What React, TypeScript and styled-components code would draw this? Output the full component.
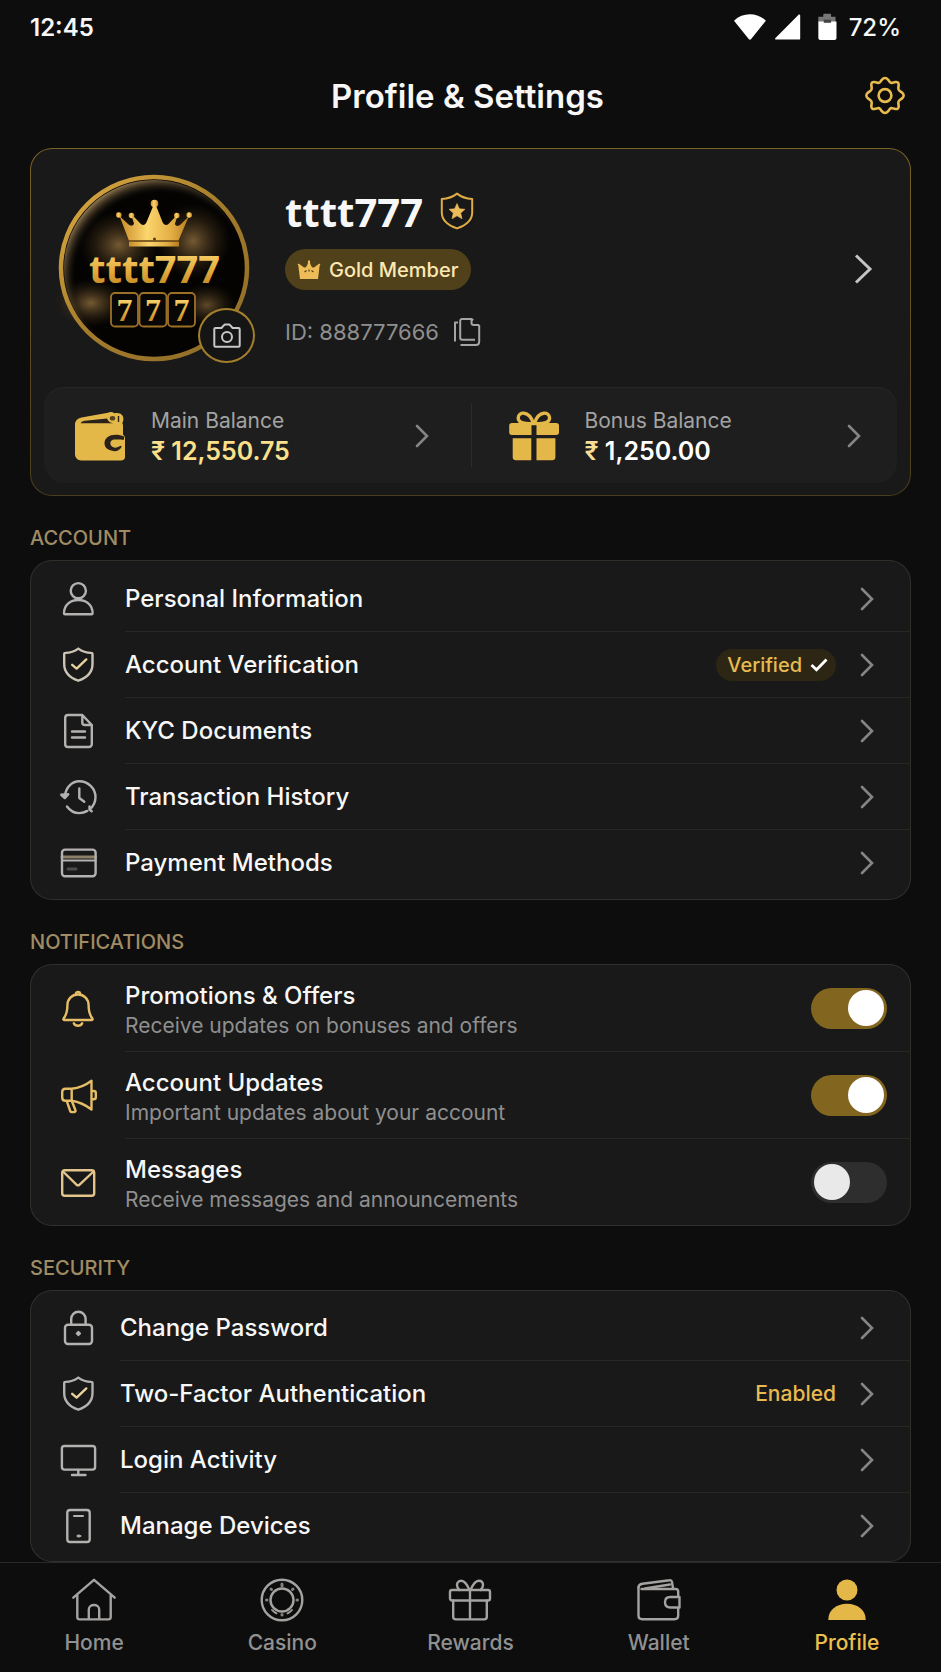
import { ReactNode, useState } from "react";
import styled, { createGlobalStyle } from "styled-components";

// === Theme ===
const theme = {
  colors: {
    background: "#0d0d0d",
    card: "#191919",
    panel: "#1e1e1e",
    line: "#272725",
    cardBorder: "#302f29",
    text: "#f7f7f7",
    textMuted: "#8f8f8f",
    icon: "#b4b2b0",
    gold: "#e8bb50",
    goldMuted: "#a08c64",
    goldDark: "#82661f",
    cream: "#fbe9b4",
  },
};

const GlobalStyle = createGlobalStyle`
  * {
    box-sizing: border-box;
  }

  body {
    margin: 0;
    background: ${theme.colors.background};
    color: ${theme.colors.text};
    font-family: Inter, "Noto Sans", sans-serif;
  }

  a {
    color: inherit;
    text-decoration: none;
  }

  button {
    padding: 0;
    border: 0;
    background: none;
    color: inherit;
    font: inherit;
    cursor: pointer;
  }

  svg {
    display: block;
    flex: none;
    overflow: visible;
  }
`;

// === Layout ===
const Page = styled.div`
  display: flex;
  flex-direction: column;
  min-height: 100vh;
`;

const StatusBar = styled.div`
  display: flex;
  align-items: center;
  justify-content: space-between;
  height: 54px;
  padding: 0 40px 0 30px;
  font-size: 24px;
  font-weight: 500;
`;

const Clock = styled.span`
  font-weight: 600;
`;

const StatusIcons = styled.div`
  display: flex;
  align-items: center;
  gap: 13px;
`;

const Header = styled.header`
  display: grid;
  grid-template-columns: 1fr auto 1fr;
  align-items: center;
  height: 84px;
  padding: 0 36px 0 30px;
`;

const Title = styled.h1`
  grid-column: 2;
  margin: 0;
  font-size: 33px;
  font-weight: 600;
`;

const SettingsButton = styled.button`
  justify-self: end;
`;

const Main = styled.main`
  flex: 1;
  padding: 10px 30px 0;
`;

// === Profile card ===
const ProfileCard = styled.section`
  padding: 26px 13px 12px;
  border: 1px solid transparent;
  border-radius: 22px;
  background:
    linear-gradient(${theme.colors.card}, ${theme.colors.card}) padding-box,
    linear-gradient(180deg, #7a6124, #4a3d1c) border-box;
`;

const ProfileTop = styled.div`
  display: flex;
  align-items: center;
  padding: 0 24px 26px 15px;
`;

const AvatarBox = styled.div`
  position: relative;
  margin-right: 36px;
`;

const CameraButton = styled.button`
  position: absolute;
  right: -6px;
  bottom: -2px;
  display: flex;
  align-items: center;
  justify-content: center;
  width: 57px;
  height: 55px;
  border: 2px solid #a37f2c;
  border-radius: 50%;
  background: #151515;
`;

const ProfileInfo = styled.div`
  display: flex;
  flex: 1;
  flex-direction: column;
  align-items: flex-start;
`;

const NameRow = styled.div`
  display: flex;
  align-items: center;
  gap: 17px;
  height: 42px;
  margin-bottom: 17px;
`;

const Name = styled.h2`
  margin: 0;
  font-family: "Noto Sans", sans-serif;
  font-size: 40px;
  font-weight: 700;
`;

const MemberBadge = styled.div`
  display: flex;
  align-items: center;
  gap: 8px;
  height: 41px;
  margin-bottom: 28px;
  padding: 0 13px 0 12px;
  border-radius: 21px;
  background: #51411a;
  color: ${theme.colors.cream};
  font-size: 20px;
  font-weight: 500;
`;

const IdRow = styled.div`
  display: flex;
  align-items: center;
  gap: 14px;
  height: 28px;
  color: ${theme.colors.textMuted};
  font-size: 22px;
`;

const BalancePanel = styled.div`
  display: grid;
  grid-template-columns: 1fr 1fr;
  align-items: center;
  height: 96px;
  border-radius: 20px;
  background: ${theme.colors.panel};
  box-shadow: inset 0 1px 0 #262626;
`;

const Balance = styled.a`
  display: flex;
  align-items: center;
  height: 64px;
  padding: 2px 42px 0 30px;

  & + & {
    padding: 2px 36px 0;
    border-left: 1px solid #2c2c2c;
  }
`;

const BalanceText = styled.div`
  display: flex;
  flex: 1;
  flex-direction: column;
  padding: 2px 0 0 25px;
`;

const BalanceLabel = styled.span`
  color: #a3a3a3;
  font-size: 21px;
  line-height: 28px;
`;

const BalanceValue = styled.span<{ $gold?: boolean }>`
  color: ${({ $gold }) => ($gold ? "#fbe08c" : "#ffffff")};
  font-size: 25px;
  font-weight: 600;
  line-height: 32px;
`;

const Currency = styled.span`
  color: #f9dd94;
`;

// === Settings lists ===
const SectionTitle = styled.h3`
  margin: 30px 0 10px;
  color: ${theme.colors.goldMuted};
  font-size: 20px;
  font-weight: 500;
  line-height: 24px;
`;

const Card = styled.div<{ $pad: string }>`
  padding: ${({ $pad }) => $pad};
  border-radius: 22px;
  background: ${theme.colors.card};
  box-shadow: inset 0 0 0 1px ${theme.colors.cardBorder};
`;

const RowBody = styled.div`
  display: flex;
  flex: 1;
  align-items: center;
  align-self: stretch;
  border-bottom: 1px solid ${theme.colors.line};
`;

const Row = styled.a<{ $gap: number }>`
  display: flex;
  align-items: center;
  gap: ${({ $gap }) => $gap}px;
  height: 66px;
  padding: 0 1px 0 30px;

  ${RowBody} {
    padding-right: 36px;
  }

  &:last-child ${RowBody} {
    border-bottom-color: transparent;
  }
`;

const RowLabel = styled.span`
  flex: 1;
  font-size: 24px;
  font-weight: 500;
`;

const VerifiedPill = styled.span`
  display: flex;
  align-items: center;
  gap: 8px;
  height: 32px;
  margin-right: 24px;
  padding: 0 8px 0 11px;
  border-radius: 16px;
  background: #2e2614;
  color: ${theme.colors.gold};
  font-size: 20px;
  font-weight: 500;
`;

const EnabledText = styled.span`
  margin-right: 24px;
  color: ${theme.colors.gold};
  font-size: 21px;
  font-weight: 500;
`;

const SwitchRow = styled.label`
  display: flex;
  align-items: center;
  gap: 28px;
  height: 87px;
  padding: 0 1px 0 31px;
  cursor: pointer;

  ${RowBody} {
    padding-right: 23px;
  }

  &:last-child ${RowBody} {
    border-bottom-color: transparent;
  }
`;

const SwitchText = styled.span`
  display: flex;
  flex: 1;
  flex-direction: column;
  padding-top: 6px;
  font-size: 24px;
  font-weight: 500;
  line-height: 30px;
`;

const SwitchHint = styled.span`
  color: ${theme.colors.textMuted};
  font-size: 21px;
  font-weight: 400;
`;

const Switch = styled.input`
  appearance: none;
  display: flex;
  align-items: center;
  width: 76px;
  height: 41px;
  margin: 0;
  padding: 0 3px;
  border-radius: 21px;
  background: #2e2e2e;
  cursor: pointer;

  &::before {
    content: "";
    width: 36px;
    height: 36px;
    border-radius: 50%;
    background: #e9e9e9;
  }

  &:checked {
    justify-content: flex-end;
    background: ${theme.colors.goldDark};
  }

  &:checked::before {
    background: #ffffff;
  }
`;

// === Bottom navigation ===
const BottomNav = styled.nav`
  position: sticky;
  bottom: 0;
  display: grid;
  grid-template-columns: repeat(5, 1fr);
  padding: 13px 0 16px;
  border-top: 1px solid #292929;
  background: ${theme.colors.background};
`;

const NavItem = styled.a<{ $active?: boolean }>`
  display: flex;
  flex-direction: column;
  align-items: center;
  gap: 6px;
  color: ${({ $active }) => ($active ? "#ecc04c" : "#919191")};
  font-size: 21px;
  font-weight: 500;
  line-height: 26px;
`;

// === Icons ===
type IconProps = {
  children: ReactNode;
  size?: number;
  color?: string;
  stroke?: number;
};

const Icon = ({ children, size = 36, color = theme.colors.icon, stroke = 2.4 }: IconProps) => (
  <svg
    width={size}
    height={size}
    viewBox={`0 0 ${size} ${size}`}
    fill="none"
    stroke={color}
    strokeWidth={stroke}
    strokeLinecap="round"
    strokeLinejoin="round"
    aria-hidden="true"
  >
    {children}
  </svg>
);

const Chevron = ({ large }: { large?: boolean }) =>
  large ? (
    <svg width="20" height="32" viewBox="0 0 20 32" fill="none" stroke="#c4c4c4" strokeWidth="3" aria-hidden="true">
      <path d="M3 3.500 17 17 3 30.500" />
    </svg>
  ) : (
    <svg
      width="14"
      height="24"
      viewBox="0 0 14 24"
      fill="none"
      stroke="#858585"
      strokeWidth="2.6"
      strokeLinecap="round"
      aria-hidden="true"
    >
      <path d="M2 2 12 12 2 22" />
    </svg>
  );

const UserIcon = () => (
  <Icon>
    <circle cx="18.3" cy="9.7" r="7.6" />
    <path d="M4 32.2c0-8 6-13.2 14.3-13.2s14.3 5.2 14.3 13.2c0 .8-.4 1-1 1H5c-.6 0-1-.3-1-1z" />
  </Icon>
);

const ShieldIcon = ({ color }: { color?: string }) => (
  <Icon color={color}>
    <path d="M18.3 1.6C14.5 4.4 9.5 5.8 5.4 5.9c-.8 0-1.2.4-1.2 1.2V17c0 8.8 6.2 14 14.1 16.7C26.2 31 32.5 25.8 32.5 17V7.1c0-.8-.4-1.200-1.200-1.200-4.100-.1-9.200-1.500-13-4.300z" />
    <path d="m12.200 17.800 4.400 3.800 9.700-9.200" stroke="#e9d29c" />
  </Icon>
);

const DocumentIcon = () => (
  <Icon>
    <path d="M22.3 2H8a2.800 2.800 0 0 0-2.800 2.800v26.400A2.800 2.800 0 0 0 8 34h21a2.800 2.800 0 0 0 2.800-2.800V12zM22.300 2v7.400c0 1.800.8 2.600 2.600 2.600h6.900" />
    <path d="M12 18.500h13M12 24.500h13" />
  </Icon>
);

const HistoryIcon = () => (
  <Icon>
    <path d="M5 16.500C5.800 8.500 12 2.300 19.300 2.300c8.700 0 16.200 7 16.200 15.700 0 5.200-2.200 9.400-5.800 12.300M7 27.500c3 4.300 7.300 6.600 12.300 6.600 3 0 5.700-.8 8-2.200M29.500 27.500v3l2.200 1.700" />
    <path d="M19.300 9.500V19l5 3.800" />
    <path d="m1.300 15.800 3.500 3.300 3.500-3.800z" fill={theme.colors.icon} />
  </Icon>
);

const CardIcon = () => (
  <Icon>
    <path d="M2 12h33.600" stroke="#8d8069" strokeWidth="3" />
    <path d="M2 15.400h33.600" strokeWidth="2" />
    <path d="M8 24h8" stroke="#4c4a48" strokeWidth="3" />
    <rect x="2" y="4.600" width="33.600" height="26.600" rx="3" />
  </Icon>
);

const BellIcon = () => (
  <Icon color="#e5bd66">
    <path d="M17 3.500c-6.200 0-10.600 4.600-10.600 10.800 0 7-1.200 9.900-3.600 13-.7 1-.4 1.700.7 1.700h27c1.100 0 1.400-.7.700-1.700-2.400-3.100-3.600-6-3.600-13C27.600 8.100 23.200 3.500 17 3.500z" />
    <path d="M14.800 3.200c0-3 4.400-3 4.400 0M12.800 32.300c1.500 3.300 6.900 3.300 8.400 0" />
  </Icon>
);

const MegaphoneIcon = () => (
  <Icon color="#e5bd66">
    <path d="M4.500 10.800h6.200C18.600 10 25 7 30.500 2.800v28.700C25 27.300 18.600 24 10.700 22.800H4.500c-2 0-3.300-1.300-3.300-3.300v-5.400c0-2 1.300-3.300 3.300-3.300zM10.700 10.800v12" />
    <path d="M5.800 23.200 9.200 33c.4 1.200 1.200 1.200 2.200 1.100l1.800-.1c1.400-.1 1.700-1.100 1.100-2.200l-3.400-8.600M31 13h1.700c1.300 0 2.100.8 2.100 2v4.200c0 1.200-.8 2-2.100 2H31" />
  </Icon>
);

const MailIcon = () => (
  <Icon color="#e3c48a">
    <rect x="1.2" y="5.2" width="32" height="25.6" rx="2.6" />
    <path d="m2 6.500 14.200 13.800h1.600L32.500 6.500" />
  </Icon>
);

const LockIcon = () => (
  <Icon>
    <rect x="5" y="14.800" width="27" height="19.200" rx="3" />
    <path d="M11.200 14.800V9a7.200 7.200 0 0 1 14.400 0v5.800" />
    <path d="m18.400 21.500 2 2-2 2-2-2z" fill={theme.colors.icon} strokeWidth="1.500" />
  </Icon>
);

const MonitorIcon = () => (
  <Icon>
    <rect x="1.900" y="4" width="33.200" height="23.600" rx="2.600" />
    <path d="M18.300 28v4.600M12 33h13.500" />
  </Icon>
);

const PhoneIcon = () => (
  <Icon>
    <rect x="7.300" y="2" width="22.400" height="32" rx="2.800" />
    <path d="M14 8h9" strokeWidth="2" />
    <ellipse cx="18.800" cy="28" rx="2" ry="1" fill={theme.colors.icon} strokeWidth="1" />
  </Icon>
);

const GearIcon = () => (
  <Icon size={40} color={theme.colors.gold} stroke={2.6}>
    <path d="M16.800 3.800Q20 .2 23.200 3.800L24.800 6Q25.800 7.200 27.400 6.700L30.600 6Q33.600 5.700 33.700 8.700L33.300 12Q33.100 13.800 34.500 14.800L37 16.600Q40.300 19.500 37 22.400L34.500 24.200Q33.100 25.200 33.300 27L33.700 30.300Q33.600 33.300 30.600 33L27.400 32.300Q25.800 31.800 24.800 33L23.200 35.200Q20 38.800 16.800 35.200L15.200 33Q14.200 31.800 12.600 32.300L9.400 33Q6.400 33.300 6.300 30.300L6.700 27Q6.900 25.200 5.500 24.200L3 22.400Q-.3 19.500 3 16.600L5.500 14.800Q6.900 13.800 6.700 12L6.300 8.700Q6.400 5.700 9.400 6L12.600 6.700Q14.200 7.200 15.200 6z" />
    <circle cx="20" cy="19.500" r="6.400" />
  </Icon>
);

const WalletFilledIcon = () => (
  <svg width="52" height="50" viewBox="0 0 52 50" aria-hidden="true">
    <path
      d="M7.500 6.500 34 1.800c2-1.300 4.600-1 6.300.4 4-.5 6.600 0 8.200 2.400 1.300 2 1.200 5.200-.2 7.500.5.7.7 1.600.7 2.600v9.100c1.500 1 2 2.300 2 4.200v18c0 2.300-1.500 3.500-4 3.500H7.300C3.800 49.500 1 46.800 1 43.300V14c0-3.800 2.300-6.700 6.500-7.500z"
      fill="#e4b749"
    />
    <path d="M6.500 12.300c1-1.600 2.500-2.300 4.500-2.600L33 7.400c.8 2.700 3 4.500 6.500 4.900H8.500z" fill="#28221a" />
    <ellipse cx="38.500" cy="7.300" rx="2.700" ry="2.300" fill="#55431d" />
    <path d="M44.500 5v6" stroke="#28221a" strokeWidth="1.4" />
    <path
      d="M50 25.500c-5-2.400-12.400-2.600-16.300.4-5 3.900-4 10.700 1.800 13.200 5 2 10 1.400 12.300-3.600l-1.400-.7c-2.800 2.200-6.700 2.500-8.700.5-2.600-2.600-1.200-6.300 2.500-6.700 3-.3 5.300-.3 9.800.2z"
      fill="#28221a"
    />
  </svg>
);

const GiftFilledIcon = () => (
  <svg width="52" height="50" viewBox="0 0 52 50" fill="#e4b749" aria-hidden="true">
    <path
      d="M25.500 12.500c-7.500.6-15.300-.3-15.300-5.600 0-3.100 2.700-5 5.800-4.700 4.700.5 7.700 4.700 9.500 10.300zm.8 0c7.500.6 15.300-.3 15.300-5.600 0-3.100-2.700-5-5.800-4.700-4.700.5-7.700 4.700-9.500 10.300z"
      fill="none"
      stroke="#e4b749"
      strokeWidth="3.400"
    />
    <path d="M4 12h19.500v12H4c-1.800 0-2.800-1-2.800-2.800v-6.400C1.200 13 2.200 12 4 12zm24.500 0h19.700c1.800 0 2.800 1 2.800 2.800v6.400c0 1.800-1 2.800-2.800 2.800H28.500z" />
    <path d="M4.700 27.200h18.600v22H8c-2.200 0-3.300-1.100-3.300-3.300zm23.800 0h18.900v18.700c0 2.200-1.100 3.300-3.300 3.300H28.500z" />
  </svg>
);

const Avatar = () => (
  <svg width="190" height="186" viewBox="0 0 190 186" role="img" aria-label="tttt777 logo">
    <defs>
      <linearGradient id="ring" x1="0" y1="0" x2="1" y2="1">
        <stop offset="0" stopColor="#e0ad42" />
        <stop offset="0.5" stopColor="#a37b2b" />
        <stop offset="1" stopColor="#8d6c28" />
      </linearGradient>
      <linearGradient id="metal" x1="0" y1="0" x2="0" y2="1">
        <stop offset="0.15" stopColor="#fbd774" />
        <stop offset="0.55" stopColor="#e5ad3e" />
        <stop offset="0.9" stopColor="#c08223" />
      </linearGradient>
      <linearGradient id="crown" x1="0" y1="0" x2="1" y2="0">
        <stop offset="0" stopColor="#c98b28" />
        <stop offset="0.4" stopColor="#fbd56d" />
        <stop offset="0.75" stopColor="#e3ad43" />
        <stop offset="1" stopColor="#b67c21" />
      </linearGradient>
      <radialGradient id="glow">
        <stop offset="0" stopColor="#8a6a3c" stopOpacity="0.85" />
        <stop offset="1" stopColor="#3a2a14" stopOpacity="0" />
      </radialGradient>
      <radialGradient id="rim" cx="0.54" cy="0.55" r="0.56">
        <stop offset="0.84" stopColor="#000" stopOpacity="0" />
        <stop offset="1" stopColor="#a88a5c" stopOpacity="0.8" />
      </radialGradient>
    </defs>
    <ellipse cx="95" cy="93" rx="93" ry="91" fill="#040302" />
    <ellipse cx="60" cy="70" rx="40" ry="34" fill="url(#glow)" />
    <ellipse cx="134" cy="66" rx="38" ry="38" fill="url(#glow)" />
    <ellipse cx="32" cy="128" rx="36" ry="24" fill="url(#glow)" />
    <ellipse cx="148" cy="130" rx="30" ry="22" fill="url(#glow)" opacity="0.8" />
    <ellipse cx="95" cy="93" rx="90" ry="88" fill="url(#rim)" />
    <ellipse cx="95" cy="93" rx="93" ry="91" fill="none" stroke="url(#ring)" strokeWidth="4.5" />
    <g fill="url(#crown)">
      <path d="M60.500 41 69 49c2.500 2.300 5 2.400 6-.5l-2.500-7.500 1.300-.5 8 8.500c2.500 2 4.700 1 6-2.500L95 29l1.500.2L103.500 47c1.300 3 3.700 4 6 2l7.500-8 1.300.6-2.400 7.400c1 2.600 3.500 2.500 6 .3l8-8-10.500 24.500H70z" />
      <path d="M70 66.500h50v5H70z" />
      <circle cx="95.5" cy="28.5" r="3.8" />
      <circle cx="59.800" cy="40" r="2.8" />
      <circle cx="72.500" cy="40.500" r="2.8" />
      <circle cx="117.800" cy="40.500" r="2.8" />
      <circle cx="130.200" cy="40" r="2.8" />
    </g>
    <path d="M70 65.800h50" stroke="#6b4413" />
    <circle cx="95.5" cy="64" r="1.500" fill="#5a3a10" />
    <text
      x="95.500"
      y="107.500"
      textAnchor="middle"
      fontFamily="Noto Sans, sans-serif"
      fontSize="38"
      fontWeight="700"
      fill="url(#metal)"
    >
      tttt777
    </text>
    <g fill="#090705" stroke="#9d7028" strokeWidth="1.8">
      <rect x="52" y="118" width="27" height="33.500" rx="4" />
      <rect x="80.500" y="118" width="27" height="33.500" rx="4" />
      <rect x="109" y="118" width="27" height="33.500" rx="4" />
    </g>
    <g fontFamily="Liberation Serif, serif" fontSize="32" fontWeight="700" fill="url(#metal)" textAnchor="middle">
      <text x="65.500" y="145.500">7</text>
      <text x="94" y="145.500">7</text>
      <text x="122.500" y="145.500">7</text>
    </g>
  </svg>
);

const CameraIcon = () => (
  <svg
    width="28"
    height="26"
    viewBox="0 0 28 26"
    fill="none"
    stroke="#c8c8c8"
    strokeWidth="2"
    strokeLinejoin="round"
    aria-hidden="true"
  >
    <path d="M2.500 5h6l2.300-2.700c.4-.5.8-.8 1.500-.8h3.500c.7 0 1.100.3 1.500.8L19.600 5h5.900c.7 0 1.200.4 1.200 1.100v16.500c0 .8-.5 1.200-1.200 1.200h-23c-.7 0-1.200-.4-1.200-1.200V6.100C1.300 5.400 1.800 5 2.500 5z" />
    <circle cx="14" cy="14" r="5" />
  </svg>
);

const StarShieldIcon = () => (
  <svg
    width="34"
    height="38"
    viewBox="0 0 34 38"
    fill="none"
    stroke="#e0ac45"
    strokeWidth="2"
    strokeLinejoin="round"
    aria-hidden="true"
  >
    <path d="M17 1.600C13 4.800 7.800 6.600 1.800 7v13.500c0 7.800 6.200 12.800 15.200 15.900 9-3.100 15.200-8.100 15.200-15.900V7C26.200 6.600 21 4.800 17 1.600z" />
    <path
      d="m17 11.500 2.300 5.300 5.700.5-4.300 3.800 1.300 5.700-5-3-5 3 1.300-5.700L9 17.300l5.700-.5z"
      fill="#ecbc5a"
      stroke="#ecbc5a"
      strokeWidth="0.6"
    />
  </svg>
);

const CrownIcon = () => (
  <svg width="24" height="20" viewBox="0 0 24 20" fill="#eebd57" aria-hidden="true">
    <path d="M3 19 1.300 5.200C.1 4.300.8 3.400 2 3.800L7 7.500c1.500.2 2.500-.6 3-2l1-2.600c-.4-1.600 0-2.700 1-2.700s1.400 1.100 1 2.700l1 2.600c.5 1.400 1.500 2.200 3 2l5-3.700c1.200-.4 1.900.5.7 1.400L21 19z" />
    <path d="m7.500 12 2-1.500M12 9.500v2M14.500 10.500l2 1.500" stroke="#51411a" strokeWidth="1.2" />
  </svg>
);

const CopyIcon = () => (
  <svg
    width="28"
    height="30"
    viewBox="0 0 28 30"
    fill="none"
    stroke="#a5a5a5"
    strokeWidth="2"
    strokeLinejoin="round"
    aria-hidden="true"
  >
    <path d="M9.200 2h9.300V5.800c0 1.500.7 2.200 2.200 2.200h5.500M18.500 2l1.800 1.200M26.200 8v16.500c0 2.200-1.100 3.500-3.300 3.500H7.500M22 22.700H9.200c-1.300 0-2-.6-2-1.900V4c0-1.300.7-2 2-2" />
    <path d="M2 24.500V5.500h3" />
  </svg>
);

const navIcons = {
  home: (
    <Icon size={48} color="#a5a3a1">
      <path d="M3.300 21.700 24 3.800l20.700 17.900M7.300 19v22c0 1.600.8 2.400 2.400 2.400h28.600c1.600 0 2.400-.8 2.400-2.400V19M18.800 43V33.500c0-6 10.400-6 10.400 0V43" />
    </Icon>
  ),
  casino: (
    <Icon size={48} color="#a5a3a1">
      <circle cx="24" cy="24" r="20.3" />
      <circle cx="24" cy="24" r="11.5" />
      <path d="M24 8v2M24 38.500v.5M8.500 24H9M39 24h.5M13 13l.5.5M35 13l-.5.5" stroke="#83817f" strokeWidth="3" />
      <path d="M14 34c1.300 1.500 2.800 2.600 4.500 3.400M34 34c-1.300 1.500-2.800 2.600-4.500 3.400" strokeWidth="1.8" />
    </Icon>
  ),
  rewards: (
    <Icon size={48} color="#a5a3a1">
      <rect x="4" y="14" width="40" height="10.500" rx="2" />
      <path d="M7.200 24.500v16.300c0 1.700.9 2.600 2.600 2.600h28.400c1.700 0 2.600-.9 2.600-2.600V24.500M24 14v29" />
      <path d="M23.500 14c-2.300-5.500-5-9.300-8.300-9.300-2.600 0-4.200 1.900-4.200 4.400 0 1.900.8 3.600 2.400 4.900M24.500 14c2.300-5.500 5-9.300 8.300-9.300 2.600 0 4.200 1.900 4.200 4.400 0 1.900-.8 3.600-2.400 4.900" />
    </Icon>
  ),
  wallet: (
    <Icon size={48} color="#a5a3a1">
      <path d="M43.200 20v-4.400c0-1.700-1-2.600-2.600-2.600H6.500M3.500 11.500v28c0 2.300 1.400 3.700 3.700 3.700h32.300c2.300 0 3.700-1.400 3.700-3.700V32" />
      <path d="M3.500 11.500c0-2.500 1.500-3.400 3.900-3.800L34.700 4.200c1.300-.2 2 .4 2.300 1.700l1 6.300M10 12.500l25-4" />
      <path d="M44.500 21h-9.200c-3.300 0-5.300 2-5.300 5.200s2 5.300 5.300 5.300h9.200z" />
    </Icon>
  ),
  profile: (
    <Icon size={48} color="none">
      <g fill="#e4b749">
        <circle cx="24" cy="14" r="10.5" />
        <path d="M5.300 44c-.2-10 8-16.300 18.700-16.300S42.900 34 42.700 44z" />
      </g>
    </Icon>
  ),
};

// === Data ===
const accountRows = [
  { id: "personal", label: "Personal Information", icon: <UserIcon /> },
  { id: "verification", label: "Account Verification", icon: <ShieldIcon color="#cbc3b4" />, verified: true },
  { id: "kyc", label: "KYC Documents", icon: <DocumentIcon /> },
  { id: "transactions", label: "Transaction History", icon: <HistoryIcon /> },
  { id: "payments", label: "Payment Methods", icon: <CardIcon /> },
];

const notificationRows = [
  { id: "promotions", label: "Promotions & Offers", hint: "Receive updates on bonuses and offers", icon: <BellIcon /> },
  { id: "updates", label: "Account Updates", hint: "Important updates about your account", icon: <MegaphoneIcon /> },
  { id: "messages", label: "Messages", hint: "Receive messages and announcements", icon: <MailIcon /> },
];

const securityRows = [
  { id: "password", label: "Change Password", icon: <LockIcon /> },
  { id: "two-factor", label: "Two-Factor Authentication", icon: <ShieldIcon />, status: "Enabled" },
  { id: "activity", label: "Login Activity", icon: <MonitorIcon /> },
  { id: "devices", label: "Manage Devices", icon: <PhoneIcon /> },
];

const navItems = [
  { id: "home", label: "Home", icon: navIcons.home },
  { id: "casino", label: "Casino", icon: navIcons.casino },
  { id: "rewards", label: "Rewards", icon: navIcons.rewards },
  { id: "wallet", label: "Wallet", icon: navIcons.wallet },
  { id: "profile", label: "Profile", icon: navIcons.profile },
];

// === Main Component ===
export default function App() {
  const [enabled, setEnabled] = useState<{ [key: string]: boolean }>({
    promotions: true,
    updates: true,
    messages: false,
  });

  const toggle = (id: string) => {
    setEnabled((prev) => ({ ...prev, [id]: !prev[id] }));
  };

  return (
    <Page>
      <GlobalStyle />
      <StatusBar>
        <Clock>12:45</Clock>
        <StatusIcons>
          <svg width="102" height="28" viewBox="0 0 104 28" fill="#fff" aria-hidden="true">
            <path d="M0 7.500C9-1.200 23.500-1.200 32.500 7.500L17.500 26.200c-.8 1-1.700 1-2.500 0z" />
            <path d="M67.500 2.600v23c0 .8-.4 1.200-1.200 1.200H43c-1.200 0-1.500-.8-.7-1.600L65.600 1.800c.9-.9 1.900-.5 1.900.8z" />
            <path d="M86 3.500h5V1.300c0-.5.3-.8.8-.8h6.400c.5 0 .8.3.8.8v2.200h4.500V9H86z" fill="#777" />
            <path d="M86 8.500h18.500v16.700c0 1.300-.8 2-2 2H88c-1.200 0-2-.7-2-2z" />
            <path d="M91.500 6.500h7.500v3.200h-7.500z" fill="#444" />
          </svg>
          <span>72%</span>
        </StatusIcons>
      </StatusBar>

      <Header>
        <Title>Profile &amp; Settings</Title>
        <SettingsButton aria-label="Settings">
          <GearIcon />
        </SettingsButton>
      </Header>

      <Main>
        <ProfileCard>
          <ProfileTop>
            <AvatarBox>
              <Avatar />
              <CameraButton aria-label="Change photo">
                <CameraIcon />
              </CameraButton>
            </AvatarBox>
            <ProfileInfo>
              <NameRow>
                <Name>tttt777</Name>
                <StarShieldIcon />
              </NameRow>
              <MemberBadge>
                <CrownIcon />
                Gold Member
              </MemberBadge>
              <IdRow>
                <span>ID: 888777666</span>
                <button aria-label="Copy ID">
                  <CopyIcon />
                </button>
              </IdRow>
            </ProfileInfo>
            <a href="#profile-details" aria-label="Profile details">
              <Chevron large />
            </a>
          </ProfileTop>
          <BalancePanel>
            <Balance href="#main-balance">
              <WalletFilledIcon />
              <BalanceText>
                <BalanceLabel>Main Balance</BalanceLabel>
                <BalanceValue $gold>₹ 12,550.75</BalanceValue>
              </BalanceText>
              <Chevron />
            </Balance>
            <Balance href="#bonus-balance">
              <GiftFilledIcon />
              <BalanceText>
                <BalanceLabel>Bonus Balance</BalanceLabel>
                <BalanceValue>
                  <Currency>₹</Currency> 1,250.00
                </BalanceValue>
              </BalanceText>
              <Chevron />
            </Balance>
          </BalancePanel>
        </ProfileCard>

        <SectionTitle>ACCOUNT</SectionTitle>
        <Card $pad="6px 0 4px">
          {accountRows.map((row) => (
            <Row key={row.id} href={`#${row.id}`} $gap={29}>
              {row.icon}
              <RowBody>
                <RowLabel>{row.label}</RowLabel>
                {row.verified && (
                  <VerifiedPill>
                    Verified
                    <svg width="18" height="14" viewBox="0 0 18 14" fill="none" stroke="#fff" strokeWidth="2.8" aria-hidden="true">
                      <path d="m1.500 7 5 4.800L16.500 1.500" />
                    </svg>
                  </VerifiedPill>
                )}
                <Chevron />
              </RowBody>
            </Row>
          ))}
        </Card>

        <SectionTitle>NOTIFICATIONS</SectionTitle>
        <Card $pad="1px 0 0">
          {notificationRows.map((row) => (
            <SwitchRow key={row.id}>
              {row.icon}
              <RowBody>
                <SwitchText>
                  {row.label}
                  <SwitchHint>{row.hint}</SwitchHint>
                </SwitchText>
                <Switch type="checkbox" checked={enabled[row.id]} onChange={() => toggle(row.id)} />
              </RowBody>
            </SwitchRow>
          ))}
        </Card>

        <SectionTitle>SECURITY</SectionTitle>
        <Card $pad="5px 0 3px">
          {securityRows.map((row) => (
            <Row key={row.id} href={`#${row.id}`} $gap={24}>
              {row.icon}
              <RowBody>
                <RowLabel>{row.label}</RowLabel>
                {row.status && <EnabledText>{row.status}</EnabledText>}
                <Chevron />
              </RowBody>
            </Row>
          ))}
        </Card>
      </Main>

      <BottomNav>
        {navItems.map((item) => (
          <NavItem key={item.id} href={`#${item.id}`} $active={item.id === "profile"}>
            {item.icon}
            {item.label}
          </NavItem>
        ))}
      </BottomNav>
    </Page>
  );
}
